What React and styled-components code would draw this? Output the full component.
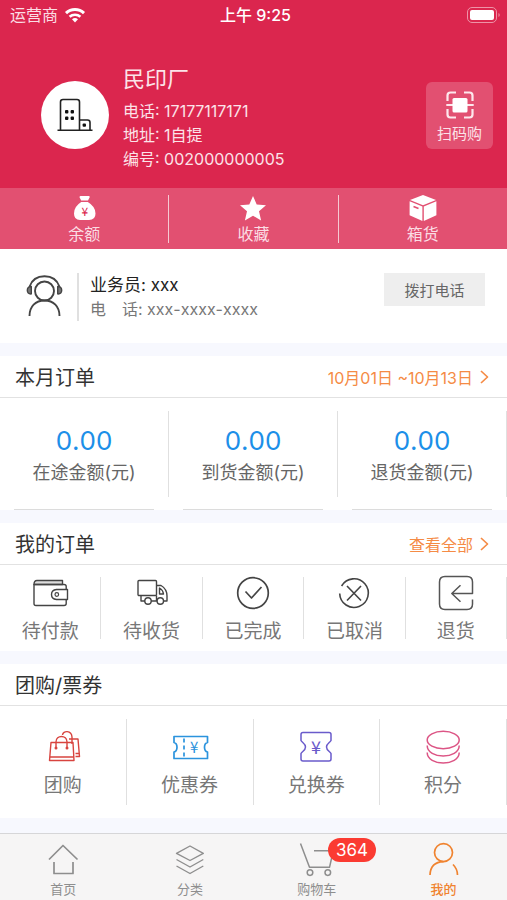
import React from 'react';
import styled, { createGlobalStyle } from 'styled-components';

const GlobalStyle = createGlobalStyle`
	* {
		box-sizing: border-box;
	}
	body {
		margin: 0;
		background: #f7f8fe;
		color: #333;
		font-family: Inter, 'Noto Sans CJK SC', sans-serif;
		font-size: 16px;
		font-kerning: none;
	}
	button {
		border: 0;
		padding: 0;
		background: none;
		color: inherit;
		font: inherit;
		cursor: pointer;
	}
	a {
		color: inherit;
		text-decoration: none;
	}
	h1, h2, p {
		margin: 0;
		font-weight: 400;
	}
	svg {
		display: block;
		flex: none;
		overflow: visible;
	}
`;

const Page = styled.div`
	display: flex;
	flex-direction: column;
	min-height: 100vh;
`;

//header
const Header = styled.header`
	background: #db264e;
	color: #fff;
`;

const StatusBar = styled.div`
	display: grid;
	grid-template-columns: 1fr auto 1fr;
	align-items: center;
	height: 30px;
	padding: 0 6px 0 10px;
	line-height: 28px;
`;

const Carrier = styled.span`
	display: flex;
	align-items: center;
	gap: 7px;
	color: #fbdde4;
`;

const Clock = styled.span`
	font-weight: 500;
`;

const Battery = styled.span`
	justify-self: end;
`;

const Profile = styled.div`
	display: flex;
	align-items: center;
	padding: 29px 14px 17px 41px;
`;

const Avatar = styled.div`
	display: flex;
	align-items: center;
	justify-content: center;
	width: 68px;
	height: 68px;
	border-radius: 50%;
	background: #fff;
`;

const ProfileText = styled.div`
	flex: 1;
	padding-left: 14px;
	color: #fce3e9;
	line-height: 24px;

	h1 {
		font-size: 22px;
		line-height: 40px;
	}
`;

const ScanButton = styled.button`
	display: flex;
	flex-direction: column;
	align-items: center;
	gap: 5px;
	width: 67px;
	height: 67px;
	padding-top: 9px;
	border-radius: 6px;
	background: #e25071;
	color: #fce3e9;
	font-size: 15px;
	line-height: 20px;
`;

//rows of cells
const Row = styled.div`
	display: flex;
	height: ${(props) => props.$height}px;
	background: ${(props) => props.$bg || '#fff'};
`;

const Divider = styled.span`
	align-self: center;
	width: 1px;
	height: ${(props) => props.$height}px;
	background: ${(props) => props.$color || '#e0e0e0'};
`;

const Cell = styled.button`
	display: flex;
	flex: 1;
	flex-direction: column;
	align-items: center;
	gap: ${(props) => props.$gap || 8}px;
	padding-top: ${(props) => props.$top}px;
	color: ${(props) => props.$color || '#777'};
	font-size: ${(props) => props.$size || 19}px;
	line-height: 26px;
`;

const StatCell = styled.div`
	flex: 1;
	margin: 0 14px;
	padding-top: 26px;
	border-bottom: 1px solid #dcdcdc;
	color: #666;
	font-size: 18px;
	line-height: 26px;
	text-align: center;
	white-space: nowrap;
`;

const StatValue = styled.p`
	padding-bottom: 2px;
	color: #1c8fe8;
	font-size: 26px;
	line-height: 34px;
`;

//salesman
const Contact = styled.section`
	display: flex;
	align-items: flex-start;
	padding: 24px 22px 22px 26px;
	background: #fff;
`;

const ContactText = styled.div`
	flex: 1;
	margin-left: 14px;
	padding-left: 11px;
	border-left: 2px solid #e0e0e0;
	line-height: 24px;
`;

const ContactName = styled.p`
	color: #222;
	font-size: 17px;
`;

const ContactPhone = styled.p`
	color: #777;
`;

const CallButton = styled.button`
	width: 101px;
	height: 33px;
	background: #eee;
	color: #666;
	font-size: 15px;
`;

const Section = styled.section`
	margin-top: 13px;
	background: #fff;
`;

const SectionHead = styled.div`
	display: flex;
	align-items: center;
	justify-content: space-between;
	height: 42px;
	padding: 0 18px 0 15px;
	border-bottom: 1px solid #e2e2e2;

	h2 {
		font-size: 20px;
	}
`;

const MoreLink = styled.a`
	display: flex;
	align-items: center;
	gap: 8px;
	color: #f58b45;
`;

//bottom tabs
const TabBar = styled.nav`
	display: flex;
	height: 67px;
	margin-top: auto;
	border-top: 1px solid #d6d6d8;
	background: #f6f5f5;
`;

const Tab = styled.a`
	display: flex;
	flex: 1;
	flex-direction: column;
	align-items: center;
	gap: 4px;
	padding-top: 10px;
	color: ${(props) => (props.$active ? '#f0832f' : '#8e8e8e')};
	font-size: 13px;
	font-weight: ${(props) => (props.$active ? 500 : 400)};
	line-height: 18px;
`;

const TabIcon = styled.span`
	position: relative;
`;

const Badge = styled.span`
	position: absolute;
	top: -6px;
	left: 27px;
	padding: 0 8px;
	border-radius: 12px;
	background: #fb3b32;
	color: #fff;
	font-size: 17px;
	font-weight: 400;
	line-height: 24px;
`;

const Icon = ({ w = 36, h = w, color = 'currentColor', stroke = 1.5, children }) => (
	<svg
		width={w}
		height={h}
		viewBox={`0 0 ${w} ${h}`}
		fill='none'
		stroke={color}
		strokeWidth={stroke}
		strokeLinejoin='round'
		aria-hidden='true'
	>
		{children}
	</svg>
);

const Yen = ({ x, y, size, color }) => (
	<text
		x={x}
		y={y}
		fontSize={size}
		fill={color}
		stroke='none'
		textAnchor='middle'
		fontFamily="'Noto Sans CJK SC', sans-serif"
	>
		¥
	</text>
);

const WifiIcon = () => (
	<Icon w={20} h={16} color='#fff' stroke={3}>
		<path d='M1 6.2A13 13 0 0 1 19 6.2' />
		<path d='M4.6 9.8A8 8 0 0 1 15.4 9.8' strokeWidth='2.6' />
		<path d='M10 15.5l-3-3.2a4.4 4.4 0 0 1 6 0z' fill='#fff' stroke='none' />
	</Icon>
);

const BatteryIcon = () => (
	<Icon w={34} h={16} color='#ee93a7' stroke={1}>
		<rect x='.5' y='.5' width='29' height='15' rx='4.5' />
		<rect x='3' y='3' width='24' height='10' rx='2' fill='#fff' stroke='none' />
		<path d='M31.5 6v4c1.6-.6 1.6-3.4 0-4z' fill='#ee93a7' stroke='none' />
	</Icon>
);

const BuildingIcon = () => (
	<Icon color='#222' stroke={1.6}>
		<path d='M3.5 33V5q0-2.5 2.5-2.5h14q2.5 0 2.5 2.5v28M22.5 23h8q2.5 0 2.5 2.5V33M.5 33.2h35' />
		<g fill='#111' stroke='none'>
			<rect x='8' y='13' width='3.4' height='3.4' rx='1' />
			<rect x='13.6' y='13' width='3.4' height='3.4' rx='1' />
			<rect x='8' y='19.6' width='3.4' height='3.4' rx='1' />
			<rect x='13.6' y='19.6' width='3.4' height='3.4' rx='1' />
			<rect x='25.6' y='26.4' width='3.4' height='3.4' rx='1' />
		</g>
	</Icon>
);

const ScanIcon = () => (
	<Icon w={28} color='#fde8ed' stroke={2.2}>
		<path d='M1.5 10V4.5q0-3 3-3H10M18 1.5h5.5q3 0 3 3V10M26.5 18v5.5q0 3-3 3H18M10 26.5H4.5q-3 0-3-3V18M.3 14h27.4' />
		<rect x='6.5' y='7' width='15' height='14.4' rx='1.5' fill='#fff' stroke='none' />
	</Icon>
);

const MoneyBagIcon = () => (
	<Icon w={28} h={24} color='none'>
		<path d='M9.5 1.2Q9.500 0 10.700 0h8Q19.900 0 19.700 1.200L18 4.600h-6.800zM11.200 6h6.600Q25.500 10.500 25.500 17.500 25.500 24 19 24h-9Q4 24 4 17.500 4 10.500 11.200 6z' fill='#fff' />
		<Yen x={14.8} y={19.5} size={12} color='#db264e' />
	</Icon>
);

const StarIcon = () => (
	<Icon w={28} h={24} color='none'>
		<path d='M14 0l3.700 8.400 9.300.8-7 6.100 2.100 9.200L14 19.700l-8.100 4.800L8 15.300 1 9.200l9.300-.8z' fill='#fff' />
	</Icon>
);

const BoxIcon = () => (
	<Icon w={28} h={24} color='none'>
		<path d='M14-1L27 4 14 9.300 1 4z' fill='#fff' />
		<path d='M.6 5.300L13.400 10.500V25L.6 19.300z' fill='#fff' />
		<path d='M27.400 5.300L14.800 10.500V25l12.600-5.700z' fill='#fff' />
		<path d='M4.500 10.600l5 2' stroke='#e25071' strokeWidth='1.6' />
	</Icon>
);

const AgentIcon = () => (
	<Icon w={37} h={44} color='#444' stroke={1.9}>
		<circle cx='18.5' cy='18' r='9.5' />
		<path d='M3.600 13.500C6 6.500 11.500 3.200 18.500 3.200S31 6.500 33.400 13.500' />
		<path
			d='M5.300 13.500v7.400C2.500 21.200 1.300 19.500 1.300 17.300s1.200-3.900 4-3.800zM31.700 13.500v7.400c2.800.3 4-1.400 4-3.600s-1.200-3.900-4-3.800z'
			fill='#777'
			strokeWidth='1.4'
		/>
		<path d='M3.500 43C3.500 33.500 9.500 27.500 18.500 27.500S33.500 33.500 33.500 43' />
	</Icon>
);

const ChevronIcon = () => (
	<Icon w={8} h={14} stroke={1.7}>
		<path d='M0 1l6.500 6L0 13' />
	</Icon>
);

const WalletIcon = () => (
	<Icon color='#444' stroke={1.4}>
		<path d='M2 9.500Q2 5.500 5 5.500h25.500v4z' fill='#ddd' />
		<path d='M2 9.500h30q2.200 0 2.200 2v17q0 2-2.200 2H4q-2 0-2-2z' />
		<path d='M35.500 14.500h-11q-5 .5-5 5t5 5h11z' fill='#fff' />
		<circle cx='24.8' cy='19.5' r='1.8' strokeWidth='1.2' />
	</Icon>
);

const TruckIcon = () => (
	<Icon color='#444' stroke={1.4}>
		<rect x='4' y='5.5' width='18.5' height='15' rx='1' />
		<path d='M7 20.500V26h4M17 26h6M22.500 10.500H27Q33 14 33 21v5h-3.500M22.500 20.500v5' />
		<path d='M25.500 13v6h4q-.5-4-4-6z' />
		<circle cx='14' cy='26' r='3.2' />
		<circle cx='26.3' cy='26' r='3.2' />
	</Icon>
);

const DoneIcon = () => (
	<Icon color='#444' stroke={1.7}>
		<circle cx='18' cy='18' r='15.3' />
		<path d='M10.500 16.500l6 6.500L26.500 12' />
	</Icon>
);

const CancelIcon = () => (
	<Icon color='#444' stroke={1.6}>
		<path d='M3.700 18.500A14.300 14.300 0 1 0 5.600 11' />
		<path d='M11 11l14 14.500M25 11L11 25.500' />
	</Icon>
);

const ReturnIcon = () => (
	<Icon color='#555'>
		<path d='M34.500 24.500V29q0 5.500-5.500 5.500H7Q1.500 34.500 1.500 29V7Q1.500 1.500 7 1.500h22q5.500 0 5.500 5.500v11.500H14M22.500 10.200l-8.700 8.300 8.700 8.200' />
	</Icon>
);

const BagsIcon = () => (
	<Icon color='#d8443f' stroke={1.4}>
		<path d='M6 13.500h22l1 18H4.500zM5 28h24' />
		<path d='M11 19.500V13c0-7.300 11-7.300 11 0v6.500' />
		<path d='M17.500 6c.5-4.800 9-4.800 9.500 2v2M24 10h9l1.500 17.500h-4M27 10v5M30.500 24.500h4' />
		<circle cx='11' cy='19' r='.8' />
		<circle cx='22' cy='19' r='.8' />
	</Icon>
);

const CouponIcon = () => (
	<Icon color='#2b93dd' stroke={1.7}>
		<path d='M2 7.500h33.500v6C31.500 14.500 31.500 22 35.500 23v6.500H2V23C6 22 6 14.500 2 13.500z' />
		<path d='M12 9.500v18' strokeDasharray='4 3' />
		<Yen x={22.2} y={24} size={15} color='#2b93dd' />
	</Icon>
);

const ExchangeIcon = () => (
	<Icon color='#6a5bcb'>
		<path d='M5 3.500h26q2 0 2 2v6C32 13.500 28.500 14.500 28.500 18S32 22.500 33 24.500V30q0 2-2 2H5q-2 0-2-2v-5.500C4 22.500 7.500 21.500 7.500 18S4 13.500 3 11.500v-6q0-2 2-2z' />
		<Yen x={18} y={25} size={18} color='#6a5bcb' />
	</Icon>
);

const PointsIcon = () => (
	<Icon color='#dc5585'>
		<ellipse cx='18.2' cy='11' rx='16' ry='8.7' />
		<path d='M2.200 16.500c0 14 32 14 32 0M2.200 23.500c0 14 32 14 32 0' />
	</Icon>
);

const HomeIcon = () => (
	<Icon w={32} stroke={1.7}>
		<path d='M2 15.500l14-14 14.500 14M7 18v11.500h19V18' />
	</Icon>
);

const LayersIcon = () => (
	<Icon w={32} stroke={1.4}>
		<path d='M2.500 9.300L16 2l13.300 7.300L16 16.500zM2.500 15.500L16 23l13.300-7.500M2.500 22L16 29.500 29.300 22' />
	</Icon>
);

const CartIcon = () => (
	<Icon w={32} stroke={1.5}>
		<path d='M-.5-.5l9 23.800h20L32 8M13 6.800h19' />
		<circle cx='9' cy='28.6' r='2.8' />
		<circle cx='26.8' cy='28.6' r='2.8' />
	</Icon>
);

const MeIcon = () => (
	<Icon w={32} stroke={1.7}>
		<circle cx='15.5' cy='8.6' r='9' />
		<path d='M2 31Q2.500 18 15.500 17.600M25 20.500Q29.500 25 29.500 31' />
	</Icon>
);

const shortcuts = [
	{ label: '余额', icon: <MoneyBagIcon /> },
	{ label: '收藏', icon: <StarIcon /> },
	{ label: '箱货', icon: <BoxIcon /> },
];

const stats = [
	{ label: '在途金额(元)', value: '0.00' },
	{ label: '到货金额(元)', value: '0.00' },
	{ label: '退货金额(元)', value: '0.00' },
];

const orders = [
	{ label: '待付款', icon: <WalletIcon /> },
	{ label: '待收货', icon: <TruckIcon /> },
	{ label: '已完成', icon: <DoneIcon /> },
	{ label: '已取消', icon: <CancelIcon /> },
	{ label: '退货', icon: <ReturnIcon /> },
];

const coupons = [
	{ label: '团购', icon: <BagsIcon /> },
	{ label: '优惠券', icon: <CouponIcon /> },
	{ label: '兑换券', icon: <ExchangeIcon /> },
	{ label: '积分', icon: <PointsIcon /> },
];

const tabs = [
	{ label: '首页', icon: <HomeIcon /> },
	{ label: '分类', icon: <LayersIcon /> },
	{ label: '购物车', icon: <CartIcon />, badge: 364 },
	{ label: '我的', icon: <MeIcon />, active: true },
];

const App = () => {
	return (
		<>
			<GlobalStyle />
			<Page>
				<Header>
					<StatusBar>
						<Carrier>
							运营商
							<WifiIcon />
						</Carrier>
						<Clock>上午 9:25</Clock>
						<Battery>
							<BatteryIcon />
						</Battery>
					</StatusBar>
					<Profile>
						<Avatar>
							<BuildingIcon />
						</Avatar>
						<ProfileText>
							<h1>民印厂</h1>
							<p>电话: 17177117171</p>
							<p>地址: 1自提</p>
							<p>编号: 002000000005</p>
						</ProfileText>
						<ScanButton>
							<ScanIcon />
							扫码购
						</ScanButton>
					</Profile>
				</Header>

				<Row $height={61} $bg='#e25071'>
					{shortcuts.map((item, i) => (
						<React.Fragment key={item.label}>
							{i > 0 && <Divider $height={48} $color='#f6c9d3' />}
							<Cell $top={8} $gap={1} $size={16} $color='#fbdde4'>
								{item.icon}
								{item.label}
							</Cell>
						</React.Fragment>
					))}
				</Row>

				<Contact>
					<AgentIcon />
					<ContactText>
						<ContactName>业务员: xxx</ContactName>
						<ContactPhone>电　话: xxx-xxxx-xxxx</ContactPhone>
					</ContactText>
					<CallButton>拨打电话</CallButton>
				</Contact>

				<Section>
					<SectionHead>
						<h2>本月订单</h2>
						<MoreLink href='#month'>
							10月01日 ~10月13日
							<ChevronIcon />
						</MoreLink>
					</SectionHead>
					<Row $height={112}>
						{stats.map((item) => (
							<React.Fragment key={item.label}>
								<StatCell>
									<StatValue>{item.value}</StatValue>
									<p>{item.label}</p>
								</StatCell>
								<Divider $height={86} />
							</React.Fragment>
						))}
					</Row>
				</Section>

				<Section>
					<SectionHead>
						<h2>我的订单</h2>
						<MoreLink href='#orders'>
							查看全部
							<ChevronIcon />
						</MoreLink>
					</SectionHead>
					<Row $height={86}>
						{orders.map((item) => (
							<React.Fragment key={item.label}>
								<Cell $top={10}>
									{item.icon}
									{item.label}
								</Cell>
								<Divider $height={62} />
							</React.Fragment>
						))}
					</Row>
				</Section>

				<Section>
					<SectionHead>
						<h2>团购/票券</h2>
					</SectionHead>
					<Row $height={112}>
						{coupons.map((item) => (
							<React.Fragment key={item.label}>
								<Cell $top={23}>
									{item.icon}
									{item.label}
								</Cell>
								<Divider $height={86} />
							</React.Fragment>
						))}
					</Row>
				</Section>

				<TabBar>
					{tabs.map((tab) => (
						<Tab key={tab.label} href='#' $active={tab.active}>
							<TabIcon>
								{tab.icon}
								{tab.badge && <Badge>{tab.badge}</Badge>}
							</TabIcon>
							{tab.label}
						</Tab>
					))}
				</TabBar>
			</Page>
		</>
	);
};

export default App;
